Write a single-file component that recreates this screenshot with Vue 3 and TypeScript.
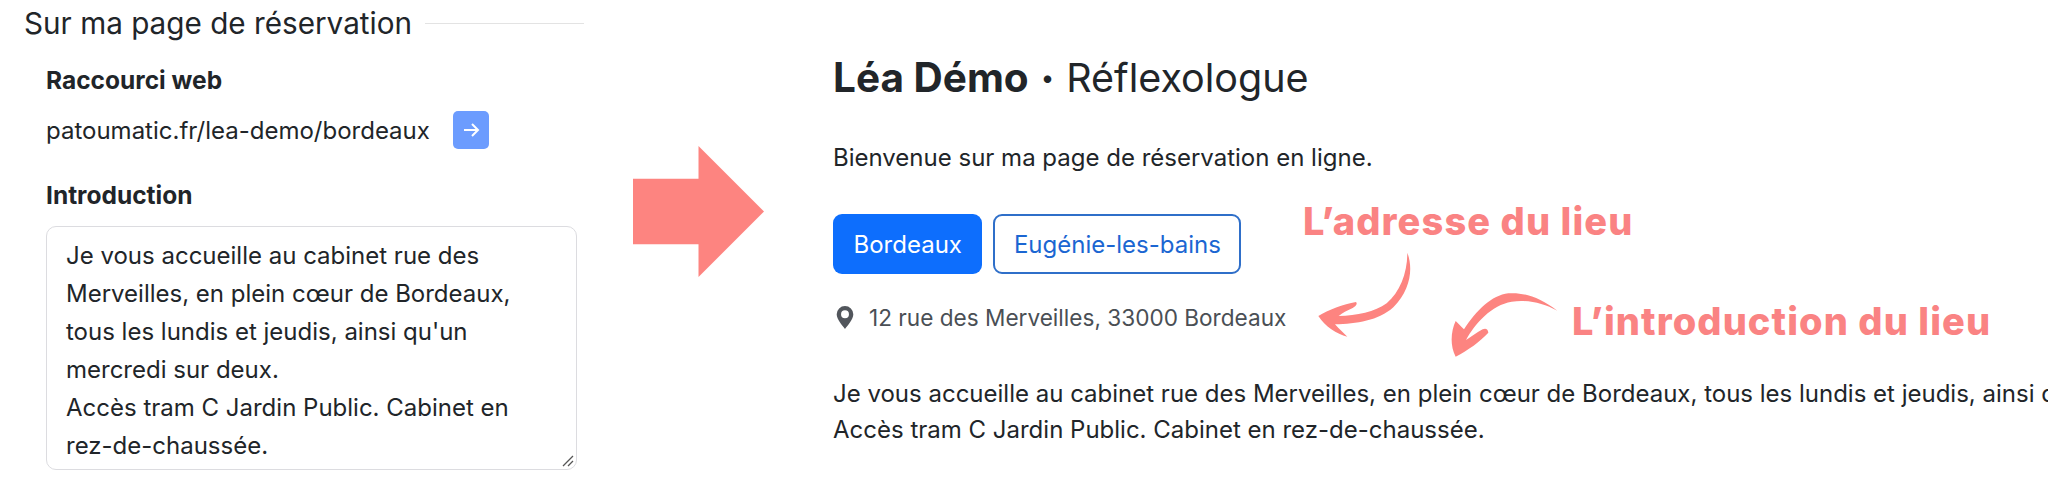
<script setup lang="ts">
const lines: string[] = [
  'Je vous accueille au cabinet rue des',
  'Merveilles, en plein cœur de Bordeaux,',
  "tous les lundis et jeudis, ainsi qu'un",
  'mercredi sur deux.',
  'Accès tram C Jardin Public. Cabinet en',
  'rez-de-chaussée.',
]
</script>

<template>
  <div class="page">
    <section class="left">
      <div class="legend"><span>Sur ma page de réservation</span><i class="rule"></i></div>
      <div class="fields">
        <h4 class="label">Raccourci web</h4>
        <div class="link-row">
          <span>patoumatic.fr/lea-demo/bordeaux</span>
          <span class="go">
            <svg width="20" height="20" viewBox="0 0 20 20" fill="none" stroke="#fff" stroke-width="2"><path d="M3 10h14M11 4l6 6-6 6"/></svg>
          </span>
        </div>
        <h4 class="label intro-label">Introduction</h4>
        <div class="textarea">
          <div v-for="l in lines" :key="l">{{ l }}</div>
          <svg class="grip" width="14" height="14" viewBox="0 0 14 14" stroke="#555" fill="none" stroke-width="1.300"><path d="M2 12L12 2M7 12l5-5"/></svg>
        </div>
      </div>
    </section>
    <div class="arrow"></div>
    <section class="right">
      <h1 class="title"><b>Léa Démo</b><span class="dot">•</span>Réflexologue</h1>
      <p class="welcome">Bienvenue sur ma page de réservation en ligne.</p>
      <div class="buttons">
        <span class="btn primary">Bordeaux</span>
        <span class="btn outline">Eugénie-les-bains</span>
      </div>
      <div class="addr">
        <svg width="18" height="23" viewBox="0 0 14 18"><path fill="#52565c" fill-rule="evenodd" d="M7 0a6.500 6.500 0 0 1 6.500 6.500C13.500 10.500 9 15.500 7 18 5 15.500.5 10.500.5 6.500A6.500 6.500 0 0 1 7 0zm0 3.400a3.100 3.100 0 1 0 0 6.200 3.100 3.100 0 0 0 0-6.200z"/></svg>
        <span>12 rue des Merveilles, 33000 Bordeaux</span>
      </div>
      <p class="body">Je vous accueille au cabinet rue des Merveilles, en plein cœur de Bordeaux, tous les lundis et jeudis, ainsi qu'un mercredi sur deux.<br>Accès tram C Jardin Public. Cabinet en rez-de-chaussée.</p>
      <div class="note note-a">L’adresse du lieu</div>
      <div class="note note-b">L’introduction du lieu</div>
      <svg class="hand-arrows" width="400" height="180" viewBox="0 0 1200 540" fill="#fd8480">
        <path d="M352 188C370 235 362 300 310 352C265 392 200 402 135 403C148 418 160 428 172 440C140 432 105 410 85 378C115 360 160 342 198 336C204 342 196 350 188 354C170 362 158 368 146 378C200 378 255 365 290 340C330 305 352 250 352 188Z"/>
        <path d="M802 362C750 322 700 306 655 310C605 316 560 360 522 418C512 408 504 400 497 393C484 420 478 465 497 500C535 480 570 455 595 428C594 418 588 414 578 418C560 428 545 440 528 450C555 400 605 345 665 335C715 328 760 340 802 362Z"/>
      </svg>
    </section>
  </div>
</template>

<style scoped>
.page { width: 2048px; height: 503px; overflow: hidden; display: flex; background: #fff; color: #212529; font-family: Inter, "Liberation Sans", sans-serif; }
.left { width: 633px; flex: none; padding: 5px 0 0 24px; box-sizing: border-box; }
.legend { display: flex; align-items: center; gap: 13px; font-size: 29.700px; line-height: 36px; width: 560px; }
.rule { flex: 1; height: 1px; background: #e3e3e3; }
.fields { padding-left: 22px; width: 531px; }
.label { margin: 23px 0 0; font-size: 24.500px; line-height: 32px; font-weight: 700; }
.link-row { display: flex; align-items: center; gap: 23px; font-size: 24px; height: 38px; margin-top: 15px; }
.go { width: 36px; height: 38px; border-radius: 5px; background: #6c9cfe; display: flex; align-items: center; justify-content: center; }
.intro-label { margin-top: 30px; }
.textarea { position: relative; margin-top: 15px; border: 1.500px solid #dcdce0; border-radius: 10px; padding: 10px 19px; font-size: 24px; line-height: 38px; height: 244px; box-sizing: border-box; white-space: nowrap; overflow: hidden; }
.grip { position: absolute; right: 1px; bottom: 1px; }
.arrow { width: 131px; height: 131px; margin-top: 146px; flex: none; background: #fd8480; clip-path: polygon(0 25%, 50% 25%, 50% 0, 100% 50%, 50% 100%, 50% 75%, 0 75%); }
.right { position: relative; flex: 1; padding: 54px 0 0 69px; min-width: 0; }
.title { margin: 0; font-size: 39.500px; line-height: 48px; font-weight: 400; display: flex; align-items: center; }
.title b { font-weight: 700; font-size: 40.500px; }
.dot { font-size: 24px; margin: 0 12px; }
.welcome { margin: 40px 0 0; font-size: 24px; line-height: 32px; }
.buttons { display: flex; gap: 11px; margin-top: 40px; }
.btn { height: 60px; box-sizing: border-box; display: flex; align-items: center; padding: 0 20.500px; border-radius: 9px; font-size: 24px; }
.primary { background: #0d6efd; color: #fff; }
.outline { border: 2px solid #2f6fc9; color: #1b66d2; padding: 0 18.500px; }
.addr { display: flex; align-items: center; gap: 15px; margin-top: 28px; font-size: 22.600px; color: #4a4f55; height: 30px; padding-left: 3px; }
.body { margin: 44px 0 0; font-size: 24px; line-height: 36px; white-space: nowrap; }
.note { position: absolute; color: #fa8383; font-family: Inter, sans-serif; font-weight: 800; font-size: 38px; letter-spacing: 1.100px; line-height: 46px; white-space: nowrap; }
.note-a { left: 539px; top: 198px; }
.note-b { left: 808px; top: 298px; }
.hand-arrows { position: absolute; left: 526px; top: 190px; }
</style>
<style>
html, body { margin: 0; background: #fff; }
</style>
